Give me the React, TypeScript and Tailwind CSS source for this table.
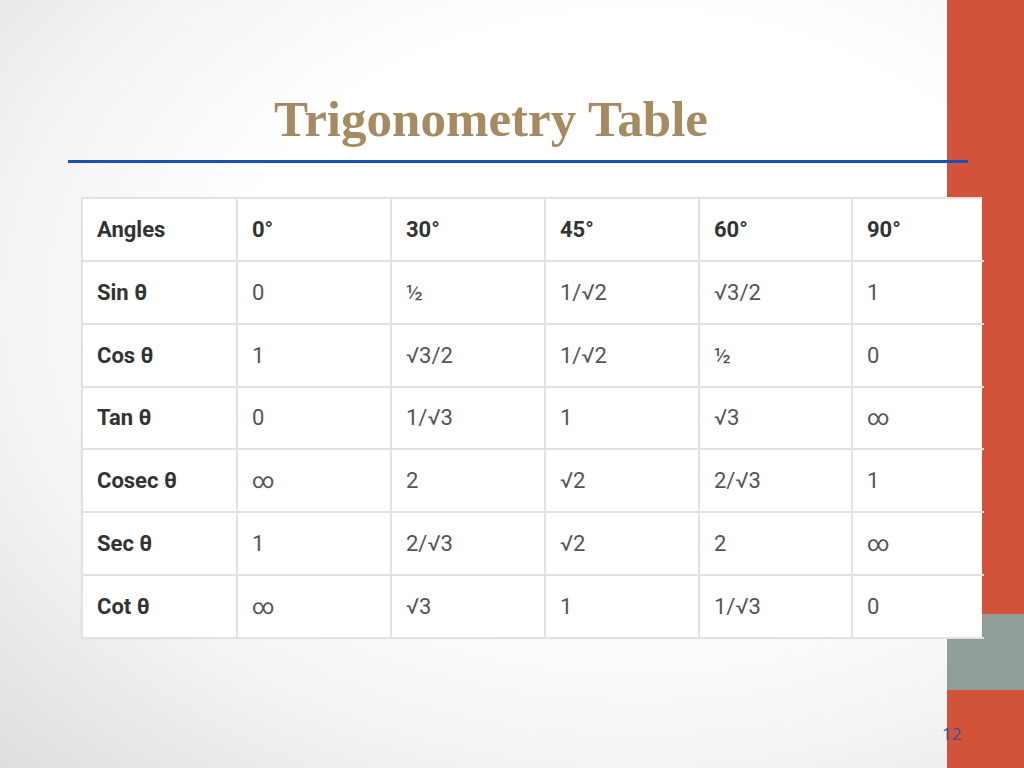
import React from "react";

const widths = ["w-[155px]", "w-[154px]", "w-[154px]", "w-[154px]", "w-[153px]", "w-[131px]"];

const header = ["Angles", "0°", "30°", "45°", "60°", "90°"];

const rows = [
  ["Sin θ", "0", "½", "1/√2", "√3/2", "1"],
  ["Cos θ", "1", "√3/2", "1/√2", "½", "0"],
  ["Tan θ", "0", "1/√3", "1", "√3", "∞"],
  ["Cosec θ", "∞", "2", "√2", "2/√3", "1"],
  ["Sec θ", "1", "2/√3", "√2", "2", "∞"],
  ["Cot θ", "∞", "√3", "1", "1/√3", "0"],
];

const Row = ({ cells, head }: { cells: string[]; head?: boolean }) => (
  <div className="flex h-[62.85px]">
    {cells.map((c, i) => (
      <div
        key={i}
        className={`${widths[i]} shrink-0 flex items-center pl-[14px] border-r-2 border-b-2 border-[#e2e2e2] last:border-r-0 text-[22px] ${
          head || i === 0 ? "font-bold text-[#333]" : "text-[#555]"
        }`}
      >
        {c}
      </div>
    ))}
  </div>
);

export default function App() {
  return (
    <div className="w-[1024px] h-[768px] flex overflow-hidden bg-[radial-gradient(ellipse_at_62%_40%,#ffffff_45%,#f4f4f4_70%,#dedede_100%)]">
      {/* Slide body */}
      <div className="w-[947px] shrink-0 flex flex-col">
        <div className="h-[160px] flex items-end pb-[15px] pl-[274px]">
          <h1 className="font-['Liberation_Serif',serif] font-bold text-[51px] leading-none text-[#a78b60]">
            Trigonometry Table
          </h1>
        </div>
        <div className="relative z-10 ml-[68px] w-[900px] h-[3px] bg-[#1c4fb3] shrink-0" />
        <div className="relative z-10 mt-[34px] ml-[81px] w-[901px] bg-white border-l-2 border-t-2 border-[#e2e2e2] font-['Roboto',sans-serif] shadow-[0_0_2px_rgba(0,0,0,0.05)]">
          <Row cells={header} head />
          {rows.map((r, i) => (
            <Row key={i} cells={r} />
          ))}
        </div>
      </div>

      {/* Right accent strip */}
      <div className="w-[77px] shrink-0 flex flex-col">
        <div className="h-[614px] bg-[#d3533a]" />
        <div className="h-[76px] bg-[#929f98]" />
        <div className="flex-1 bg-[#d3533a] relative">
          <span className="absolute left-[-5px] top-[35px] font-['Open_Sans',sans-serif] text-[17px] leading-none text-[#2b50b0]">
            12
          </span>
        </div>
      </div>
    </div>
  );
}
